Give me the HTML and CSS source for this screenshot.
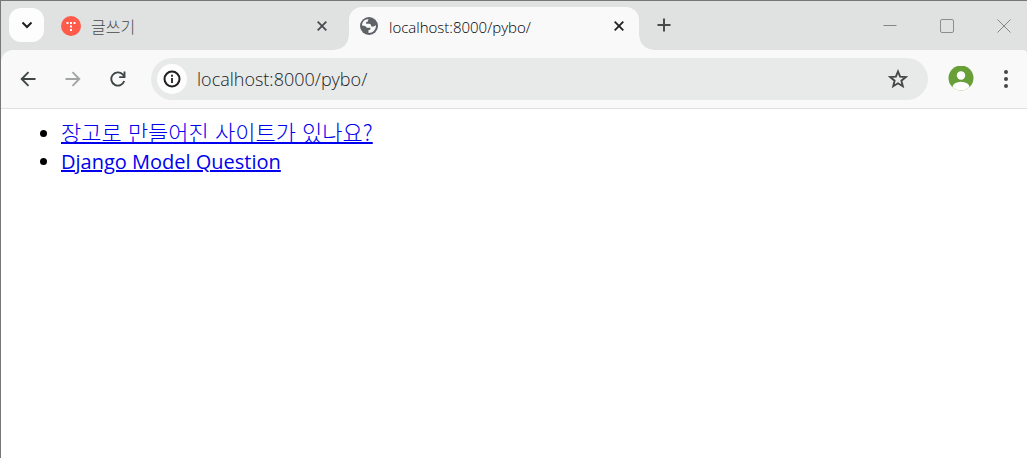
FILE: index.html
```
<!DOCTYPE html>
<html lang="ko">
<head>
    <meta charset="UTF-8">
    <meta name="viewport" content="width=device-width, initial-scale=1.0">
    <title>localhost:8000/pybo/</title>
    <link rel="stylesheet" href="styles.css">
</head>
<body>
    <div class="browser">
        <header class="tab-bar">
            <button type="button" class="tab-search" aria-label="탭 검색">
                <svg width="12" height="12" viewBox="0 0 12 12"><path d="M1.5 3.5 6 8l4.5-4.5" fill="none" stroke="#1f1f1f" stroke-width="2"/></svg>
            </button>
            <div class="tab">
                <svg width="20" height="20" viewBox="0 0 20 20">
                    <circle cx="10" cy="10" r="10" fill="#ff5a4a"/>
                    <path d="M5.5 6h2v2h-2zM9 6h2v2H9zM12.5 6h2v2h-2zM9 9.5h2v2H9zM9 13h2v2H9z" fill="#fff"/>
                </svg>
                <span class="tab-title">글쓰기</span>
                <button type="button" class="icon-button" aria-label="탭 닫기">
                    <svg width="10" height="10" viewBox="0 0 10 10"><path d="m.7.7 8.6 8.6M9.3.7.7 9.3" stroke="#454a4d" stroke-width="1.8"/></svg>
                </button>
            </div>
            <div class="tab tab-active">
                <svg width="20" height="20" viewBox="0 0 20 20">
                    <circle cx="10" cy="10" r="9" fill="#5f6368"/>
                    <path d="M3 9.5C3 5.8 6 3 10 3c-1 .8-1.3 1.6-1 2.5-1.8 0-2 .8-2 2.2h3c1.7 0 2.2 1.3 2.2 2.8h2.3c1.1 0 1.8-.8 2.5-1.5.2 4.5-3 8-7.5 8v-3c1.6 0 2-.8 2-2.3H8.3C7.2 11.7 7 10.5 6 10Z" fill="#f9f9f9"/>
                </svg>
                <span class="tab-title">localhost:8000/pybo/</span>
                <button type="button" class="icon-button" aria-label="탭 닫기">
                    <svg width="10" height="10" viewBox="0 0 10 10"><path d="m.7.7 8.6 8.6M9.3.7.7 9.3" stroke="#1f1f1f" stroke-width="1.8"/></svg>
                </button>
            </div>
            <button type="button" class="new-tab" aria-label="새 탭">
                <svg width="14" height="14" viewBox="0 0 14 14"><path d="M7 .5v13M.5 7h13" stroke="#474c4a" stroke-width="2"/></svg>
            </button>
            <div class="window-buttons">
                <button type="button" class="icon-button" aria-label="최소화">
                    <svg width="14" height="14" viewBox="0 0 14 14"><path d="M.5 6.5h13" stroke="#858786"/></svg>
                </button>
                <button type="button" class="icon-button" aria-label="최대화">
                    <svg width="14" height="14" viewBox="0 0 14 14"><rect x=".5" y=".5" width="13" height="13" rx="1.5" fill="none" stroke="#8c8e8d"/></svg>
                </button>
                <button type="button" class="icon-button" aria-label="닫기">
                    <svg width="14" height="14" viewBox="0 0 14 14"><path d="m.5.5 13 13m0-13-13 13" stroke="#858786"/></svg>
                </button>
            </div>
        </header>
        <nav class="toolbar">
            <button type="button" class="icon-button" aria-label="뒤로">
                <svg width="16" height="16" viewBox="0 0 16 16"><path d="M15.5 8H2M8.5 1.2 1.7 8l6.8 6.8" fill="none" stroke="#3f4746" stroke-width="1.9"/></svg>
            </button>
            <button type="button" class="icon-button" aria-label="앞으로" disabled>
                <svg width="16" height="16" viewBox="0 0 16 16"><path d="M.5 8H14M7.5 1.2 14.3 8l-6.8 6.8" fill="none" stroke="#a3a5a5" stroke-width="1.9"/></svg>
            </button>
            <button type="button" class="icon-button" aria-label="새로고침">
                <svg width="16" height="16" viewBox="0 0 16 16"><path d="M14.2 10A6.6 6.6 0 1 1 12.7 3.4L14.3 5M14.5.6v5.5H9.2" fill="none" stroke="#3f4746" stroke-width="1.9"/></svg>
            </button>
            <div class="address-bar">
                <button type="button" class="site-info" aria-label="사이트 정보">
                    <svg width="18" height="18" viewBox="0 0 18 18"><circle cx="9" cy="9" r="7.5" fill="none" stroke="#1f1f1f" stroke-width="2"/><path d="M9 8v5M9 4.8v1.9" stroke="#1f1f1f" stroke-width="1.8"/></svg>
                </button>
                <input type="text" class="address" aria-label="주소창" value="localhost:8000/pybo/">
                <button type="button" class="icon-button" aria-label="북마크">
                    <svg width="20" height="20" viewBox="0 0 20 20"><path d="m10 2.5 2.1 5.2 5.7.4-4.4 3.6 1.4 5.6-4.8-3-4.8 3 1.4-5.6-4.4-3.6 5.7-.4Z" fill="none" stroke="#454847" stroke-width="1.9"/></svg>
                </button>
            </div>
            <button type="button" class="profile" aria-label="프로필">
                <svg width="26" height="26" viewBox="0 0 26 26">
                    <clipPath id="avatar"><circle cx="13" cy="12" r="12.5"/></clipPath>
                    <g clip-path="url(#avatar)"><path d="M0 0h26v26H0z" fill="#689f38"/><circle cx="13" cy="9.5" r="4.2" fill="#fff"/><ellipse cx="13" cy="21" rx="8.5" ry="5.2" fill="#fff"/></g>
                </svg>
            </button>
            <button type="button" class="icon-button" aria-label="메뉴">
                <svg width="6" height="18" viewBox="0 0 6 18" fill="#454847"><circle cx="3" cy="2" r="2"/><circle cx="3" cy="9" r="2"/><circle cx="3" cy="16" r="2"/></svg>
            </button>
        </nav>
        <main class="page">
            <ul class="question-list">
                <li><a class="korean" href="/pybo/2/">장고로 만들어진 사이트가 있나요?</a></li>
                <li><a href="/pybo/1/">Django Model Question</a></li>
            </ul>
        </main>
    </div>
</body>
</html>
```

FILE: styles.css
```
* {
    box-sizing: border-box;
}
body {
    margin: 0;
    background: #fff;
    font-family: "Open Sans", "Noto Sans CJK KR", sans-serif;
}
button {
    display: flex;
    align-items: center;
    justify-content: center;
    flex: none;
    padding: 0;
    border: none;
    background: none;
}
svg {
    display: block;
    flex: none;
}
.browser {
    min-height: 100vh;
    border-top: 1px solid #777;
    border-left: 1px solid #777;
}
.tab-bar {
    display: flex;
    align-items: flex-start;
    height: 64px;
    margin-bottom: -15px;
    padding: 6px 0 0 8px;
    background: #e0e2e1;
}
.tab-search {
    width: 35px;
    height: 34px;
    margin-top: 1px;
    border-radius: 12px;
    background: #fdfdfd;
}
.tab {
    display: flex;
    align-items: center;
    gap: 10px;
    flex: 0 1 290px;
    height: 43px;
    padding: 0 10px 6px;
    font-size: 15px;
    color: #000;
}
.tab-search + .tab {
    flex-basis: 305px;
    padding: 0 17px 6px;
    font-size: 16px;
    color: #454a4d;
}
.tab-active {
    position: relative;
    border-radius: 13px 13px 0 0;
    background: #f9f9f9;
}
/* curved feet of the active tab */
.tab-active::before,
.tab-active::after {
    content: "";
    position: absolute;
    bottom: 0;
    width: 14px;
    height: 14px;
}
.tab-active::before {
    right: 100%;
    background: radial-gradient(circle at 0 0, #e0e2e1 13px, #f9f9f9 14px);
}
.tab-active::after {
    left: 100%;
    background: radial-gradient(circle at 100% 0, #e0e2e1 13px, #f9f9f9 14px);
}
.tab-title {
    flex: 1;
    padding-top: 3px;
    overflow: hidden;
    white-space: nowrap;
    font-weight: 300;
    line-height: 24px;
}
.icon-button {
    width: 20px;
    height: 20px;
}
.new-tab {
    width: 34px;
    height: 34px;
    margin: 1px 0 0 8px;
}
.window-buttons {
    display: flex;
    gap: 37px;
    margin: 9px 13px 0 auto;
}
.toolbar {
    position: relative;
    display: flex;
    align-items: center;
    gap: 25px;
    height: 59px;
    padding: 0 11px 0 17px;
    border-bottom: 1px solid #dfe1e0;
    border-radius: 12px 4px 0 0;
    background: #f9f9f9;
}
.address-bar {
    display: flex;
    align-items: center;
    flex: 1;
    min-width: 0;
    height: 42px;
    margin-right: -5px;
    margin-left: -2px;
    padding: 0 20px 0 6px;
    border-radius: 21px;
    background: #e8eae9;
}
.site-info {
    width: 30px;
    height: 30px;
    border-radius: 50%;
    background: #fdfdfd;
}
.address {
    flex: 1;
    min-width: 0;
    padding: 0 10px;
    border: none;
    outline: none;
    background: none;
    font-family: inherit;
    font-size: 18px;
    font-weight: 300;
    line-height: 24px;
    color: #202224;
}
.profile {
    margin-right: -3px;
}
.page {
    padding: 8px 10px;
}
.question-list {
    margin: 0;
    padding-left: 50px;
    font-size: 20px;
    line-height: 28px;
}
.question-list a {
    color: #0000ee;
    text-decoration-thickness: 2px;
}
.question-list .korean {
    font-family: "Noto Sans CJK KR", sans-serif;
    font-size: 22px;
    font-weight: 300;
}
```
